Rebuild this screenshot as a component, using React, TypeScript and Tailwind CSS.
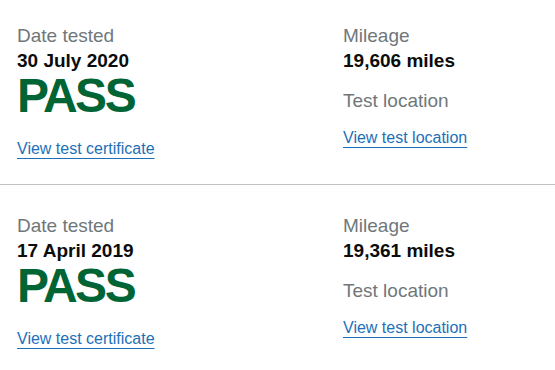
const tests = [
  { date: "30 July 2020", result: "PASS", mileage: "19,606 miles" },
  { date: "17 April 2019", result: "PASS", mileage: "19,361 miles" },
];

const Label = ({ children }: { children: React.ReactNode }) => (
  <p className="text-[19px] leading-[25px] text-[#6f777b]">{children}</p>
);

const Value = ({ children }: { children: React.ReactNode }) => (
  <p className="text-[19px] leading-[25px] font-bold text-[#0b0c0c]">{children}</p>
);

const TestLink = ({ children }: { children: React.ReactNode }) => (
  <a
    href="#"
    className="block w-fit text-[16px] leading-[20px] text-[#1d70b8] underline decoration-1 underline-offset-[4px]"
  >
    {children}
  </a>
);

const TestRow = ({
  test,
  first,
}: {
  test: (typeof tests)[number];
  first: boolean;
}) => {
  return (
    <div
      className={
        first
          ? "grid grid-cols-[326px_1fr] pl-[17px] pt-[23px] pb-[25px] border-b border-[#bfc1c3]"
          : "grid grid-cols-[326px_1fr] pl-[17px] pt-[28px] pb-[25px]"
      }
    >
      <div className="flex flex-col">
        <Label>Date tested</Label>
        <Value>{test.date}</Value>
        <p className="text-[48px] leading-[45px] font-bold tracking-[-2.5px] text-[#006435]">
          {test.result}
        </p>
        <div className="mt-[21px]">
          <TestLink>View test certificate</TestLink>
        </div>
      </div>
      <div className="flex flex-col">
        <Label>Mileage</Label>
        <Value>{test.mileage}</Value>
        <div className="mt-[15px]">
          <Label>Test location</Label>
        </div>
        <div className="mt-[15px]">
          <TestLink>View test location</TestLink>
        </div>
      </div>
    </div>
  );
};

export default function App() {
  return (
    <div className="w-[555px] h-[370px] bg-white font-['Liberation_Sans',Arial,sans-serif] overflow-hidden">
      {tests.map((test, i) => (
        <TestRow key={test.date} test={test} first={i === 0} />
      ))}
    </div>
  );
}
